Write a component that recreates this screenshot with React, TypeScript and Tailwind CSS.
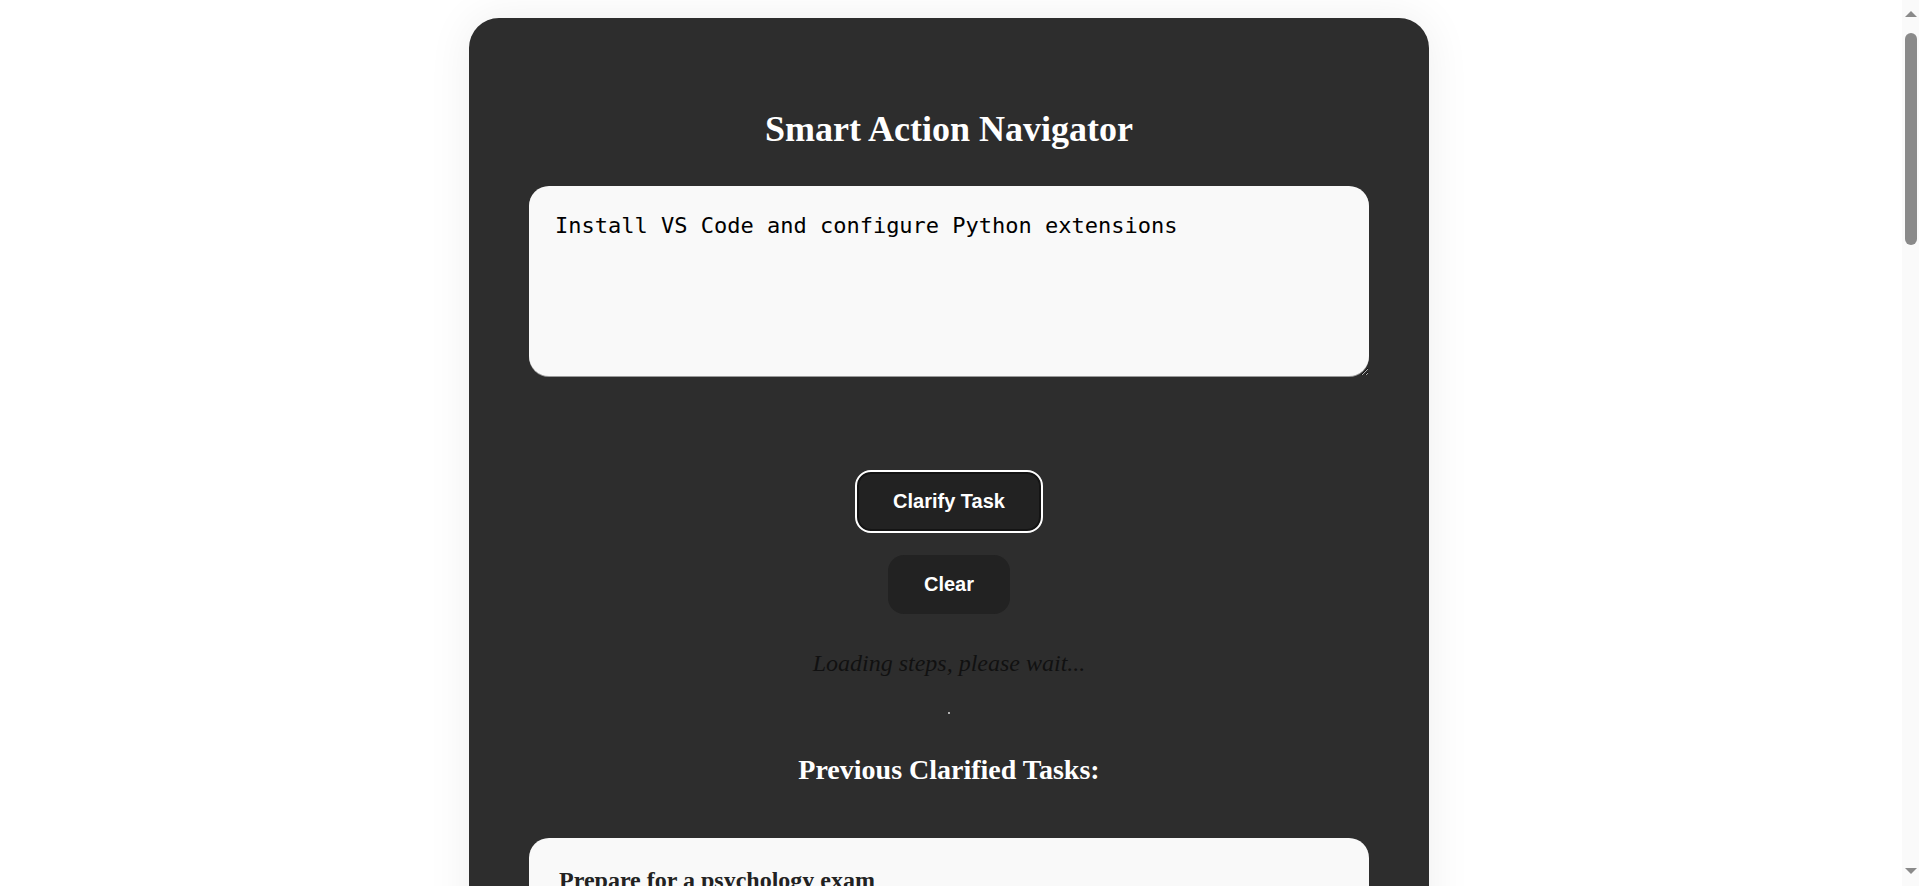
import { useState } from 'react';

const history = [
	{
		task: 'Prepare for a psychology exam',
		steps: [
			'Gather your lecture notes and the course syllabus.',
			'List the chapters that will be covered on the exam.',
			'Make a study schedule for the remaining days.',
			'Review key terms and practise with past questions.',
		],
	},
	{
		task: 'Plan a weekend trip',
		steps: ['Pick a destination.', 'Book a place to stay.', 'Pack your bag.'],
	},
];

function ScrollBar() {
	return (
		<div className="fixed top-0 right-0 bottom-0 flex w-[17px] flex-col items-center bg-[#fafafa]">
			<div className="mt-[11px] h-0 w-0 border-x-[6px] border-b-[6px] border-x-transparent border-b-[#8a8a8a]" />
			<div className="mt-[16px] h-[212px] w-[12px] rounded-full bg-[#8a8a8a]" />
			<div className="flex-1" />
			<div className="mb-[12px] h-0 w-0 border-x-[6px] border-t-[6px] border-x-transparent border-t-[#8a8a8a]" />
		</div>
	);
}

function App() {
	const [task, setTask] = useState('Install VS Code and configure Python extensions');

	return (
		<div className="min-h-screen bg-white pt-[18px] pr-[21px] pb-12 font-['Liberation_Serif',serif]">
			<div className="mx-auto w-[960px] rounded-[30px] bg-[#2d2d2d] px-[60px] pt-[91px] pb-16 shadow-[0_0_45px_rgba(0,0,0,0.07)]">
				<h1 className="text-center text-[36px] font-bold leading-[41px] text-white">
					Smart Action Navigator
				</h1>

				<textarea
					value={task}
					onChange={(e) => setTask(e.target.value)}
					className="mt-[36px] block h-[190px] w-full rounded-[20px] bg-[#f9f9f9] pr-[22px] pl-[26px] pt-[27px] pb-4 font-['DejaVu_Sans_Mono',monospace] text-[22px] leading-[26px] text-black shadow-[0_1px_0_#9a9a9a] outline-none"
				/>

				<div className="flex flex-col items-center font-['Liberation_Sans',Arial,sans-serif]">
					<button className="mt-[94px] rounded-[16px] border-2 border-white bg-[#222] px-9 py-[18px] text-[20px] font-bold leading-[23px] text-white shadow-[inset_0_0_0_2px_#141414]">
						Clarify Task
					</button>
					<button className="mt-[22px] rounded-[16px] bg-[#222] px-9 py-[18px] text-[20px] font-bold leading-[23px] text-white">
						Clear
					</button>
				</div>

				<p className="mt-[35px] text-center text-[24px] italic leading-[28px] text-[#111]">
					Loading steps, please wait...
				</p>
				<div className="mx-auto mt-[35px] h-[2px] w-[2px] rounded-full bg-[#ddd]" />

				<h2 className="mt-[40px] text-center text-[28px] font-bold leading-[32px] text-white">
					Previous Clarified Tasks:
				</h2>

				<div className="mt-[52px] flex flex-col gap-6">
					{history.map((h) => (
						<div key={h.task} className="rounded-[20px] bg-[#f9f9f9] px-[30px] pt-[28px] pb-[30px]">
							<h3 className="text-[24px] font-bold leading-[28px] text-[#222]">{h.task}</h3>
							<ol className="mt-4 list-decimal pl-6 text-[18px] leading-[28px] text-[#333]">
								{h.steps.map((s) => (
									<li key={s}>{s}</li>
								))}
							</ol>
						</div>
					))}
				</div>
			</div>
			<ScrollBar />
		</div>
	);
}

export default App;
